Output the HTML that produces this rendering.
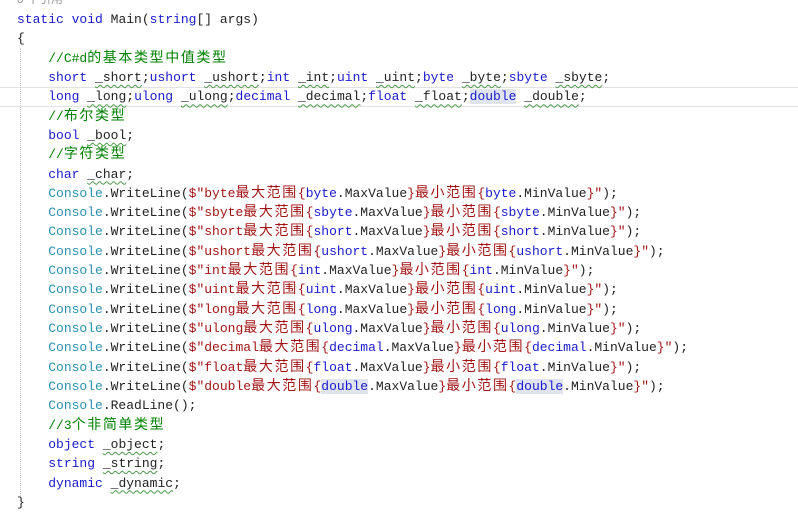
<!DOCTYPE html>
<html><head><meta charset="utf-8"><style>
html,body{margin:0;padding:0;background:#fff;width:798px;height:514px;overflow:hidden}
#code{position:absolute;left:17px;top:10px;font-family:"Liberation Mono","Noto Sans CJK SC",monospace;font-size:13px;color:#222}
#code div{height:19.32px;line-height:19.32px;white-space:pre;overflow:visible}
.k{color:#1a1ad0}.t{color:#2b91af}.s{color:#a31515}.c{color:#008000}
.z{font-family:"Noto Sans CJK SC","WenQuanYi Zen Hei",sans-serif;font-size:14px;letter-spacing:1.6px;line-height:10px}
.w{text-decoration:underline wavy #4a9a4a;text-decoration-thickness:1px;text-underline-offset:3px}
.h{background:#dfe4ee}
#cur{position:absolute;left:0;top:87px;width:798px;height:18px;border-top:1px solid #e2e2e2;border-bottom:1px solid #e2e2e2}
#guide{position:absolute;left:20px;top:48px;height:450px;border-left:1px dotted #c8c8c8}
#ref{position:absolute;left:17px;top:-8px;font-family:"Liberation Sans","Noto Sans CJK SC",sans-serif;font-size:12px;line-height:14px;color:#999}
</style></head><body>
<div id="cur"></div><div id="guide"></div>
<div id="ref">0 个引用</div>
<div id="code">
<div><span class="k">static</span> <span class="k">void</span> Main(<span class="k">string</span>[] args)</div>
<div>{</div>
<div>    <span class="c">//C#d<span class="z">的基本类型中值类型</span></span></div>
<div>    <span class="k">short</span> <span class="w">_short</span>;<span class="k">ushort</span> <span class="w">_ushort</span>;<span class="k">int</span> <span class="w">_int</span>;<span class="k">uint</span> <span class="w">_uint</span>;<span class="k">byte</span> <span class="w">_byte</span>;<span class="k">sbyte</span> <span class="w">_sbyte</span>;</div>
<div>    <span class="k">long</span> <span class="w">_long</span>;<span class="k">ulong</span> <span class="w">_ulong</span>;<span class="k">decimal</span> <span class="w">_decimal</span>;<span class="k">float</span> <span class="w">_float</span>;<span class="k h">double</span> <span class="w">_double</span>;</div>
<div>    <span class="c">//<span class="z">布尔类型</span></span></div>
<div>    <span class="k">bool</span> <span class="w">_bool</span>;</div>
<div>    <span class="c">//<span class="z">字符类型</span></span></div>
<div>    <span class="k">char</span> <span class="w">_char</span>;</div>
<div>    <span class="t">Console</span>.WriteLine(<span class="s">$"byte<span class="z">最大范围</span>{</span><span class="k">byte</span>.MaxValue<span class="s">}<span class="z">最小范围</span>{</span><span class="k">byte</span>.MinValue<span class="s">}"</span>);</div>
<div>    <span class="t">Console</span>.WriteLine(<span class="s">$"sbyte<span class="z">最大范围</span>{</span><span class="k">sbyte</span>.MaxValue<span class="s">}<span class="z">最小范围</span>{</span><span class="k">sbyte</span>.MinValue<span class="s">}"</span>);</div>
<div>    <span class="t">Console</span>.WriteLine(<span class="s">$"short<span class="z">最大范围</span>{</span><span class="k">short</span>.MaxValue<span class="s">}<span class="z">最小范围</span>{</span><span class="k">short</span>.MinValue<span class="s">}"</span>);</div>
<div>    <span class="t">Console</span>.WriteLine(<span class="s">$"ushort<span class="z">最大范围</span>{</span><span class="k">ushort</span>.MaxValue<span class="s">}<span class="z">最小范围</span>{</span><span class="k">ushort</span>.MinValue<span class="s">}"</span>);</div>
<div>    <span class="t">Console</span>.WriteLine(<span class="s">$"int<span class="z">最大范围</span>{</span><span class="k">int</span>.MaxValue<span class="s">}<span class="z">最小范围</span>{</span><span class="k">int</span>.MinValue<span class="s">}"</span>);</div>
<div>    <span class="t">Console</span>.WriteLine(<span class="s">$"uint<span class="z">最大范围</span>{</span><span class="k">uint</span>.MaxValue<span class="s">}<span class="z">最小范围</span>{</span><span class="k">uint</span>.MinValue<span class="s">}"</span>);</div>
<div>    <span class="t">Console</span>.WriteLine(<span class="s">$"long<span class="z">最大范围</span>{</span><span class="k">long</span>.MaxValue<span class="s">}<span class="z">最小范围</span>{</span><span class="k">long</span>.MinValue<span class="s">}"</span>);</div>
<div>    <span class="t">Console</span>.WriteLine(<span class="s">$"ulong<span class="z">最大范围</span>{</span><span class="k">ulong</span>.MaxValue<span class="s">}<span class="z">最小范围</span>{</span><span class="k">ulong</span>.MinValue<span class="s">}"</span>);</div>
<div>    <span class="t">Console</span>.WriteLine(<span class="s">$"decimal<span class="z">最大范围</span>{</span><span class="k">decimal</span>.MaxValue<span class="s">}<span class="z">最小范围</span>{</span><span class="k">decimal</span>.MinValue<span class="s">}"</span>);</div>
<div>    <span class="t">Console</span>.WriteLine(<span class="s">$"float<span class="z">最大范围</span>{</span><span class="k">float</span>.MaxValue<span class="s">}<span class="z">最小范围</span>{</span><span class="k">float</span>.MinValue<span class="s">}"</span>);</div>
<div>    <span class="t">Console</span>.WriteLine(<span class="s">$"double<span class="z">最大范围</span>{</span><span class="k h">double</span>.MaxValue<span class="s">}<span class="z">最小范围</span>{</span><span class="k h">double</span>.MinValue<span class="s">}"</span>);</div>
<div>    <span class="t">Console</span>.ReadLine();</div>
<div>    <span class="c">//3<span class="z">个非简单类型</span></span></div>
<div>    <span class="k">object</span> <span class="w">_object</span>;</div>
<div>    <span class="k">string</span> <span class="w">_string</span>;</div>
<div>    <span class="k">dynamic</span> <span class="w">_dynamic</span>;</div>
<div>}</div>
</div>
</body></html>
